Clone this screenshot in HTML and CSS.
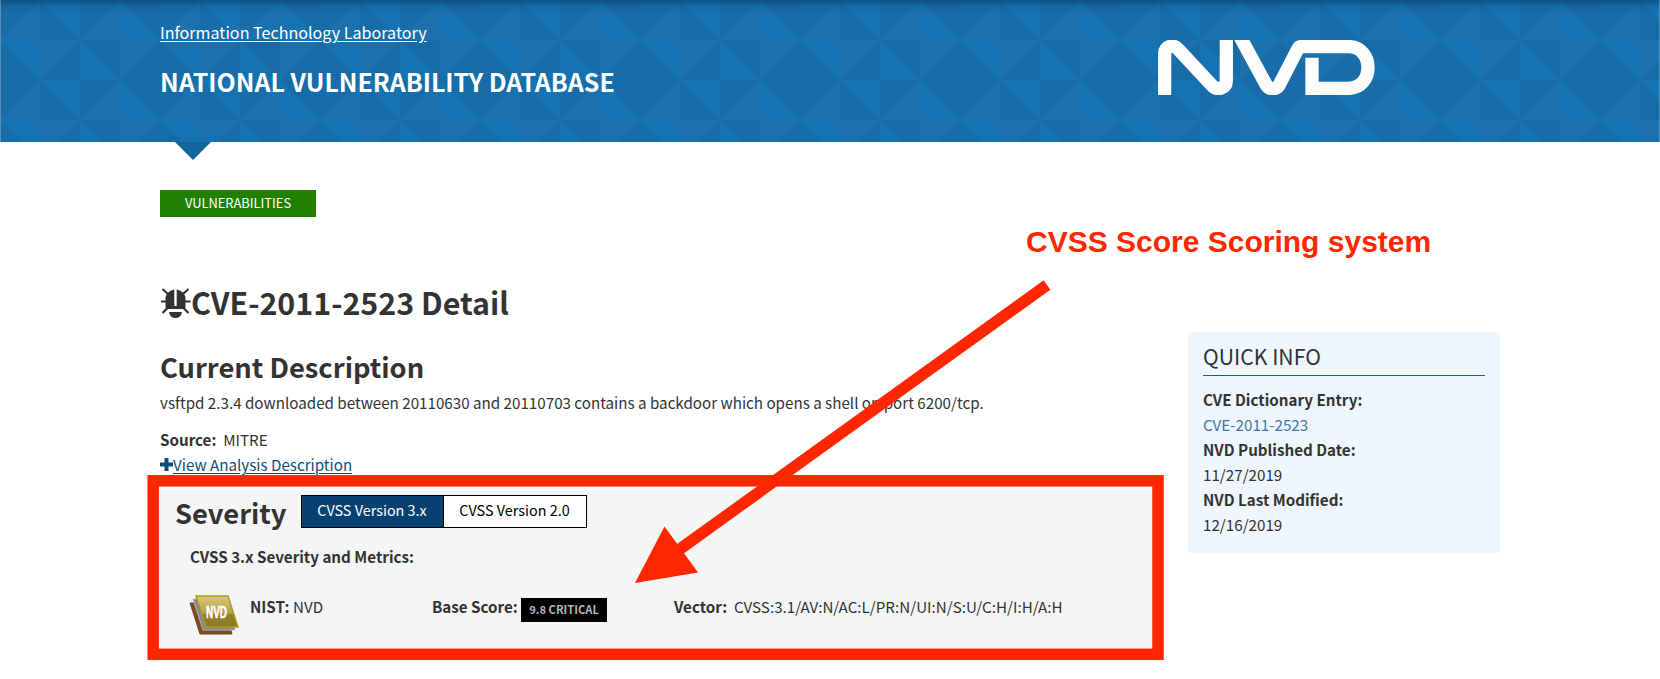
FILE: index.html
```html
<!DOCTYPE html>
<html lang="en">
<head>
<meta charset="utf-8">
<title>NVD - CVE-2011-2523</title>
<link rel="stylesheet" href="styles.css">
</head>
<body>
<header class="site-header">
  <svg class="pattern" width="1660" height="142" aria-hidden="true">
    <defs>
      <pattern id="tri" width="160" height="80" patternUnits="userSpaceOnUse">
        <rect width="160" height="80" fill="#186da9"/>
        <path fill="#1a71ad" d="M40 0v40H0zM120 0v40H80zM40 40h40l-40 40zM120 40h40l-40 40z"/>
        <path fill="#1673b2" d="M40 0h40v40zM120 0l40 40h-40zM0 40h40v40zM80 40l40 40H80z"/>
        <path fill="#176ba7" d="M40 0l40 40H40zM120 0h40v40zM0 40l40 40H0zM80 40h40v40z"/>
      </pattern>
    </defs>
    <rect width="1660" height="142" fill="url(#tri)"/>
  </svg>
  <div class="header-inner">
    <div class="titles">
      <a class="itl" href="#">Information Technology Laboratory</a>
      <div class="site-title">NATIONAL VULNERABILITY DATABASE</div>
    </div>
    <svg class="logo" width="218" height="55" viewBox="0 0 218 55" role="img" aria-label="NVD" fill="none" stroke="#fdfdfd" stroke-width="13.300">
      <path d="M6.600 55V15C6.600 6 15 3.500 20.500 9.500L54.500 46C60 51 68.300 48 68.300 41V0"/>
      <path d="M80.600 -6L108 44.500C111 50 119 50 121.500 44.500L139.500 9.500Q141 6.600 143 6.600H190.500C216.500 6.600 216.500 48.400 190.500 48.400H154V17.700"/>
    </svg>
  </div>
</header>
<main class="page">
  <section class="content">
    <span class="tag">VULNERABILITIES</span>
    <h1 class="cve"><svg class="bug" width="31" height="31" viewBox="0 0 31 31" aria-hidden="true"><path fill="#333" d="M14.300 1.500Q7 3 5.500 9V19.500Q7 21 9 21H14.300zM16.700 1.500Q24 3 25.500 9V19.500Q24 21 22 21H16.700z"/><path fill="#333" d="M13 18h5v3h-5zM9 24H22Q21 30 15.500 30T9 24z"/><path stroke="#333" stroke-width="2.200" d="M2.500 1L8 6M28.500 1L23 6M1 13.500H6M25 13.500H30.500M2.500 25L8 19.500M28.500 25L23 19.500"/></svg><span>CVE-2011-2523 Detail</span></h1>
    <h2 class="desc-title">Current Description</h2>
    <p class="desc">vsftpd 2.3.4 downloaded between 20110630 and 20110703 contains a backdoor which opens a shell on port 6200/tcp.</p>
    <p class="source"><strong>Source:</strong>&nbsp; MITRE</p>
    <div class="analysis"><svg width="13" height="13" viewBox="0 0 13 13" aria-hidden="true"><path fill="#0f4c7a" d="M4.500 0h4v4.500H13v4H8.500V13h-4V8.500H0v-4h4.500z"/></svg><a href="#">View Analysis Description</a></div>
    <section class="severity">
      <div class="sev-head">
        <h2>Severity</h2>
        <div class="tabs"><button class="tab active">CVSS Version 3.x</button><button class="tab">CVSS Version 2.0</button></div>
      </div>
      <strong class="metrics-title">CVSS 3.x Severity and Metrics:</strong>
      <div class="metrics">
        <svg class="book" width="50" height="41" viewBox="0 0 50 41" aria-hidden="true">
          <defs><linearGradient id="gold" x2="0" y2="1"><stop stop-color="#d8c878"/><stop offset=".55" stop-color="#b5a24b"/><stop offset=".6" stop-color="#94802a"/><stop offset="1" stop-color="#8d7924"/></linearGradient></defs>
          <path d="M1 8H34L43 39H11z" fill="#7b4d20" stroke="#75431a"/>
          <path d="M4 4H37L46 35H14z" fill="#888" stroke="#b5b5b5"/>
          <path d="M7 1H39L49 32H17z" fill="url(#gold)" stroke="#b09a20" stroke-width="1.400"/>
          <text x="17" y="23" textLength="21" lengthAdjust="spacingAndGlyphs" class="book-text">NVD</text>
        </svg>
        <div class="nist"><strong>NIST:</strong> NVD</div>
        <div class="score"><strong>Base Score:</strong> <span class="badge">9.8 CRITICAL</span></div>
        <div class="vector"><strong>Vector:</strong>&nbsp; CVSS:3.1/AV:N/AC:L/PR:N/UI:N/S:U/C:H/I:H/A:H</div>
      </div>
    </section>
  </section>
  <aside class="quick">
    <h3>QUICK INFO</h3>
    <strong>CVE Dictionary Entry:</strong>
    <a href="#">CVE-2011-2523</a>
    <strong>NVD Published Date:</strong>
    <span>11/27/2019</span>
    <strong>NVD Last Modified:</strong>
    <span>12/16/2019</span>
  </aside>
</main>
<div class="note">CVSS Score Scoring system</div>
<svg class="marks" width="1660" height="679" aria-hidden="true">
  <rect x="153.200" y="480.800" width="1004.800" height="173.500" fill="none" stroke="#ff2600" stroke-width="11.500"/>
  <path d="M1047 285L680 549" stroke="#ff2600" stroke-width="11.500"/>
  <path d="M635 583L664.500 526.500L698 572.500z" fill="#ff2600"/>
</svg>
</body>
</html>
```
FILE: styles.css
```css
* { box-sizing: border-box; }
body {
  margin: 0;
  height: 679px;
  overflow: hidden;
  position: relative;
  background: #fff;
  color: #333;
  font-family: "Noto Sans CJK SC", sans-serif;
  font-size: 15.180px;
  line-height: 25px;
}
h1, h2, h3, p { margin: 0; }
.site-header { position: relative; height: 142px; }
.pattern { position: absolute; inset: 0; }
.site-header::before {
  content: "";
  position: absolute;
  inset: 0;
  z-index: 1;
  background: linear-gradient(rgba(0, 30, 60, .38), rgba(0, 30, 60, .1) 6px, transparent 14px);
  box-shadow: inset 1px 0 rgba(255, 255, 255, .25), inset -1px 0 rgba(255, 255, 255, .25);
}
.site-header::after {
  content: "";
  position: absolute;
  left: 175px;
  top: 142px;
  border: 18px solid transparent;
  border-top-color: #14659e;
  border-bottom: 0;
}
.header-inner {
  position: relative;
  z-index: 2;
  display: flex;
  justify-content: space-between;
  padding: 20px 284px 0 160px;
  color: #fff;
}
.titles { display: flex; flex-direction: column; align-items: flex-start; }
.itl { color: #fff; font-size: 16.130px; text-underline-offset: 2px; }
.site-title { margin-top: 16px; font-size: 24.960px; font-weight: 700; line-height: 40px; white-space: nowrap; }
.logo { margin-top: 20px; overflow: hidden; }
.page { display: flex; align-items: flex-start; justify-content: space-between; padding: 48px 160px 0; }
.content { width: 992px; }
.tag {
  display: flex;
  justify-content: center;
  width: 156px;
  height: 27px;
  background: #218000;
  color: #fff;
  font-size: 12.900px;
}
.cve { display: flex; align-items: center; margin-top: 62px; font-size: 30.400px; line-height: 46px; }
.bug { margin-top: 2px; }
.desc-title { margin-top: 21px; font-size: 27.300px; line-height: 40px; }
.desc { margin-top: 4px; white-space: nowrap; }
.source { margin-top: 12px; }
.analysis { display: flex; align-items: center; color: #0f4c7a; }
.analysis a { color: #0f4c7a; text-underline-offset: 2px; }
.severity { height: 160px; margin-top: 13px; margin-left: -1px; padding: 5px 17px 0 16px; background: #f4f6f5; }
.sev-head { display: flex; align-items: flex-start; gap: 14px; height: 36px; }
.sev-head h2 { font-size: 27.300px; line-height: 34px; }
.tabs { display: flex; border: 1px solid #000; height: 33px; }
.tab { width: 142px; border: 0; background: #fff; color: #000; font: inherit; font-size: 14.400px; line-height: 28px; padding: 0 0 3px; }
.tab.active { background: #074171; color: #fff; border-right: 1px solid #000; }
.metrics-title { display: block; margin: 13px 0 0 15px; }
.metrics { display: grid; grid-template-columns: 61px 182px 242px 1fr; align-items: start; margin: 25px 0 0 14px; white-space: nowrap; }
.book { margin-top: 1px; }
.book-text { font: 700 17px "Liberation Sans", sans-serif; fill: #fff; stroke: #fff; stroke-width: .5px; }
.badge { display: inline-block; height: 24px; margin-bottom: -1px; padding: 0 8px; background: #000; color: #b5b5b5; font-size: 11.200px; font-weight: 700; line-height: 23px; vertical-align: -1px; }
.quick {
  display: flex;
  flex-direction: column;
  width: 312px;
  height: 221px;
  margin-top: 142px;
  padding: 7px 15px;
  background: #eff6fd;
}
.quick h3 { margin-bottom: 11px; padding-bottom: 3px; border-bottom: 1px solid #205c8e; font-size: 21.200px; font-weight: 400; line-height: 33px; }
.quick a { color: #4578a6; text-decoration: none; }
.note { position: absolute; left: 1026px; top: 224px; color: #ff2600; font: 700 30px/36px "Liberation Sans", sans-serif; white-space: nowrap; }
.marks { position: absolute; inset: 0; pointer-events: none; z-index: 3; }
```
